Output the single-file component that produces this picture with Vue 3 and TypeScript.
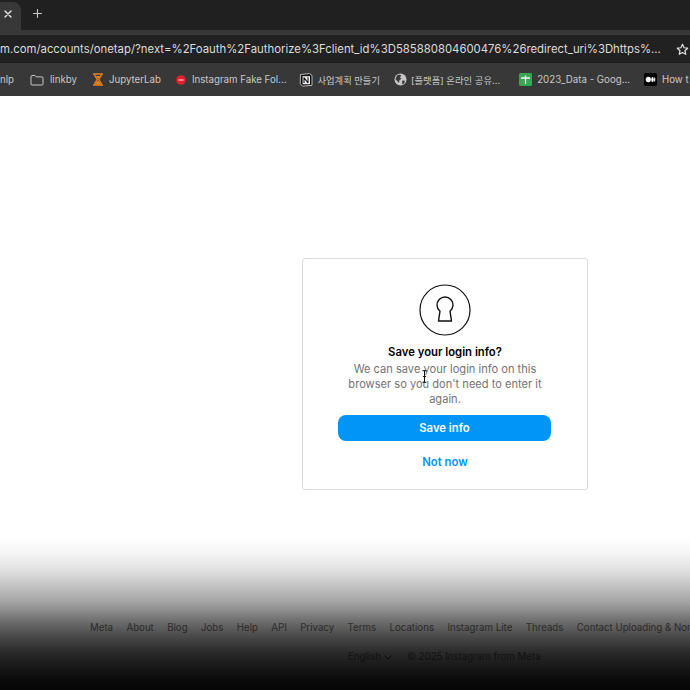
<script setup lang="ts">
interface Bookmark { label: string; icon: string }
const bookmarks: Bookmark[] = [
  { label: 'linkby', icon: 'folder' },
  { label: 'JupyterLab', icon: 'hourglass' },
  { label: 'Instagram Fake Fol...', icon: 'red' },
  { label: '사업계획 만들기', icon: 'notion' },
  { label: '[플랫폼] 온라인 공유...', icon: 'globe' },
  { label: '2023_Data - Goog...', icon: 'sheet' },
  { label: 'How t', icon: 'medium' },
]
const links = ['Meta', 'About', 'Blog', 'Jobs', 'Help', 'API', 'Privacy', 'Terms', 'Locations', 'Instagram Lite', 'Threads', 'Contact Uploading & Non-Users']
</script>

<template>
  <div class="screen">
    <div class="tabbar">
      <div class="tab">
        <svg class="tab-x" width="8" height="8" viewBox="0 0 8 8"><path d="M1 1l6 6M7 1L1 7" stroke="#e6e6e6" stroke-width="1.4" stroke-linecap="round" /></svg>
      </div>
      <svg class="plus" width="9" height="9" viewBox="0 0 9 9"><path d="M4.500.5v8M.5 4.500h8" stroke="#c8c8c8" stroke-width="1.100" stroke-linecap="round" /></svg>
    </div>
    <div class="toolbar">
      <div class="omnibox">
        <span class="url">m.com/accounts/onetap/?next=%2Foauth%2Fauthorize%3Fclient_id%3D585880804600476%26redirect_uri%3Dhttps%...</span>
        <svg class="star" width="13" height="13" viewBox="0 0 24 24"><path d="M12 2.500l2.900 6.300 6.700.8-5 4.600 1.400 6.700-6-3.400-6 3.400 1.400-6.700-5-4.600 6.700-.8z" fill="none" stroke="#e2e2e2" stroke-width="2.200" stroke-linejoin="round" /></svg>
      </div>
    </div>
    <div class="bookmarks">
      <span class="bm-first">nlp</span>
      <div v-for="b in bookmarks" :key="b.label" class="bm" :class="'bm-' + b.icon">
        <svg v-if="b.icon === 'folder'" width="14" height="12" viewBox="0 0 14 12"><path d="M1 2.500a1 1 0 0 1 1-1h3l1.200 1.400H12a1 1 0 0 1 1 1V10a1 1 0 0 1-1 1H2a1 1 0 0 1-1-1z" fill="none" stroke="#c4c7c5" stroke-width="1" /></svg>
        <svg v-else-if="b.icon === 'hourglass'" width="12" height="13" viewBox="0 0 12 13"><path d="M1 1h10M1 12h10" stroke="#e8811f" stroke-width="1.600" /><path d="M2.500 1.500C3 4 4.500 5 5.300 6.500 4.500 8 3 9 2.500 11.500M9.500 1.500C9 4 7.500 5 6.700 6.500 7.500 8 9 9 9.500 11.500" fill="none" stroke="#e8811f" stroke-width="1.300" /><path d="M3 11.500c.4-1.800 2-3 3-4 1 1 2.600 2.200 3 4zM3.800 3h4.400L6 6z" fill="#e8811f" /></svg>
        <svg v-else-if="b.icon === 'red'" width="10" height="10" viewBox="0 0 10 10"><circle cx="5" cy="5" r="4.800" fill="#e0202c" /><rect x="2.500" y="4.200" width="5" height="1.600" fill="#f2a0a0" /></svg>
        <svg v-else-if="b.icon === 'notion'" width="14" height="14" viewBox="0 0 14 14"><path d="M1.500 1.500L10.500.6 13 2.500v9.800l-9.500.9-2.300-2.700z" fill="#111" stroke="#ddd" stroke-width=".8" /><rect x="3.600" y="3.200" width="7.400" height="8" fill="#f2f2f2" /><path d="M5 4.600v5.400M5 4.600l4 5.400M9 4.200V10" fill="none" stroke="#111" stroke-width="1.100" /></svg>
        <svg v-else-if="b.icon === 'globe'" width="13" height="13" viewBox="0 0 13 13"><circle cx="6.500" cy="6.500" r="6" fill="#c4c7c5" /><path d="M3 2.500c1.500-1 3.300-1 4.300-.2L6 4.500l1.500 1.300L5.500 7 5 10 3.300 8 1.400 6.300zM8.200 7.500l2.800.3-.8 2.500-2 1.200z" fill="#3a3a3a" /></svg>
        <svg v-else-if="b.icon === 'sheet'" width="13" height="13" viewBox="0 0 13 13"><rect width="13" height="13" rx="1.500" fill="#34a853" /><path d="M2 5h9M6.500 2.500V11" stroke="#f2f2f2" stroke-width="1.300" /></svg>
        <svg v-else width="13" height="13" viewBox="0 0 13 13"><rect width="13" height="13" rx="2" fill="#000" /><ellipse cx="4.300" cy="6.500" rx="2.600" ry="2.700" fill="#fff" /><ellipse cx="8.500" cy="6.500" rx="1.300" ry="2.500" fill="#fff" /><ellipse cx="10.700" cy="6.500" rx=".6" ry="2.300" fill="#fff" /></svg>
        <span class="bm-label">{{ b.label }}</span>
      </div>
    </div>
    <main class="page">
      <div class="card">
        <svg class="key" width="52" height="52" viewBox="0 0 52 52">
          <circle cx="26" cy="26" r="25" fill="none" stroke="#111" stroke-width="1.200" />
          <path d="M19.500 37h13l-1.500-9.800a8 8 0 1 0-10 0z" fill="none" stroke="#111" stroke-width="1.400" stroke-linejoin="round" />
        </svg>
        <h1 class="title">Save your login info?</h1>
        <p class="desc">We can save your login info on this browser so you don't need to enter it again.</p>
        <svg class="cursor" width="5" height="13" viewBox="0 0 5 13"><path d="M.5.7h4M.5 12.300h4M2.500.7v11.600M1 6.500h3" stroke="#111" stroke-width="1" fill="none" /></svg>
        <button class="save">Save info</button>
        <button class="later">Not now</button>
      </div>
      <footer class="footer">
        <nav class="links"><a v-for="l in links" :key="l">{{ l }}</a></nav>
        <div class="legal">
          <span class="lang">English
            <svg width="8" height="5" viewBox="0 0 8 5"><path d="M.5.5L4 4 7.500.5" fill="none" stroke="#262626" stroke-width=".9" /></svg>
          </span>
          <span>© 2025 Instagram from Meta</span>
        </div>
      </footer>
      <div class="fade"></div>
    </main>
  </div>
</template>

<style>
html, body { margin: 0; background: #fff; }
</style>

<style scoped>
.screen { width: 690px; height: 690px; overflow: hidden; display: flex; flex-direction: column; font-family: Inter, "Noto Sans CJK KR", sans-serif; }
.tabbar { height: 30px; background: #202020; display: flex; align-items: flex-start; flex: none; }
.tab { width: 21px; height: 28px; margin-top: 2px; background: #383838; border-radius: 0 8px 0 0; display: flex; align-items: center; padding-left: 4px; box-sizing: border-box; }
.tab-x { margin-top: -4px; }
.plus { margin: 9px 0 0 12px; }
.toolbar { height: 33px; flex: none; background: #383838; padding-top: 5px; box-sizing: border-box; }
.omnibox { height: 28px; background: #212121; display: flex; align-items: center; }
.url { color: #dcdcdc; font-size: 11.350px; white-space: nowrap; width: 662px; overflow: hidden; flex: none; }
.star { margin-left: 14px; flex: none; }
.bookmarks { height: 33px; flex: none; background: #383838; display: flex; align-items: center; color: #c9c9c9; font-size: 9.700px; white-space: nowrap; overflow: hidden; box-sizing: border-box; }
.bm-first { width: 30px; flex: none; }
.bm { display: flex; align-items: center; gap: 5px; flex: none; margin-right: 15px; }
.bm-folder { gap: 6px; }
.bm-red { gap: 6px; margin-right: 13px; }
.bm-notion { gap: 4px; margin-right: 14px; }
.bm-notion .bm-label { font-size: 9.300px; }
.bm-globe .bm-label { font-size: 9.400px; }
.bm-globe { gap: 4px; margin-right: 19px; }
.bm-sheet { margin-right: 14px; }
.page { flex: 1; background: #fff; position: relative; overflow: hidden; display: flex; flex-direction: column; }
.card { width: 286px; height: 232px; box-sizing: border-box; margin: 162px 0 0 302px; border: 1px solid #dbdbdb; border-radius: 3px; display: flex; flex-direction: column; align-items: center; padding-top: 25px; flex: none; position: relative; }
.key { flex: none; }
.title { margin: 9px 0 0; font-size: 11.300px; line-height: 15px; font-weight: 600; color: #000; }
.desc { margin: 2px 0 0; width: 204px; font-size: 11.100px; line-height: 15px; text-align: center; color: #737373; }
.cursor { position: absolute; left: 119px; top: 111px; }
.save { margin: 8px 1px 0 0; width: 213px; height: 26px; border: 0; border-radius: 8px; background: #0095f6; color: #fff; font: 600 11.300px Inter, sans-serif; }
.later { margin-top: 14px; border: 0; padding: 0; background: none; color: #0095f6; font: 600 11.300px/15px Inter, sans-serif; }
.footer { margin-top: 132px; font-size: 9.700px; color: #737373; white-space: nowrap; flex: none; }
.links { display: flex; gap: 13.400px; padding-left: 90px; line-height: 12px; }
.legal { display: flex; gap: 15px; margin: 17px 0 0 348px; line-height: 12px; }
.lang { display: inline-flex; align-items: center; gap: 3px; }
.fade { position: absolute; left: 0; right: 0; top: 439px; height: 155px; background: linear-gradient(to bottom, rgba(0,0,0,0) 0%, rgba(0,0,0,0.03) 10%, rgba(0,0,0,0.12) 23%, rgba(0,0,0,0.25) 34%, rgba(0,0,0,0.37) 44%, rgba(0,0,0,0.56) 55%, rgba(0,0,0,0.72) 66%, rgba(0,0,0,0.84) 76%, rgba(0,0,0,0.92) 87%, rgba(0,0,0,0.975) 98%); pointer-events: none; }
</style>
